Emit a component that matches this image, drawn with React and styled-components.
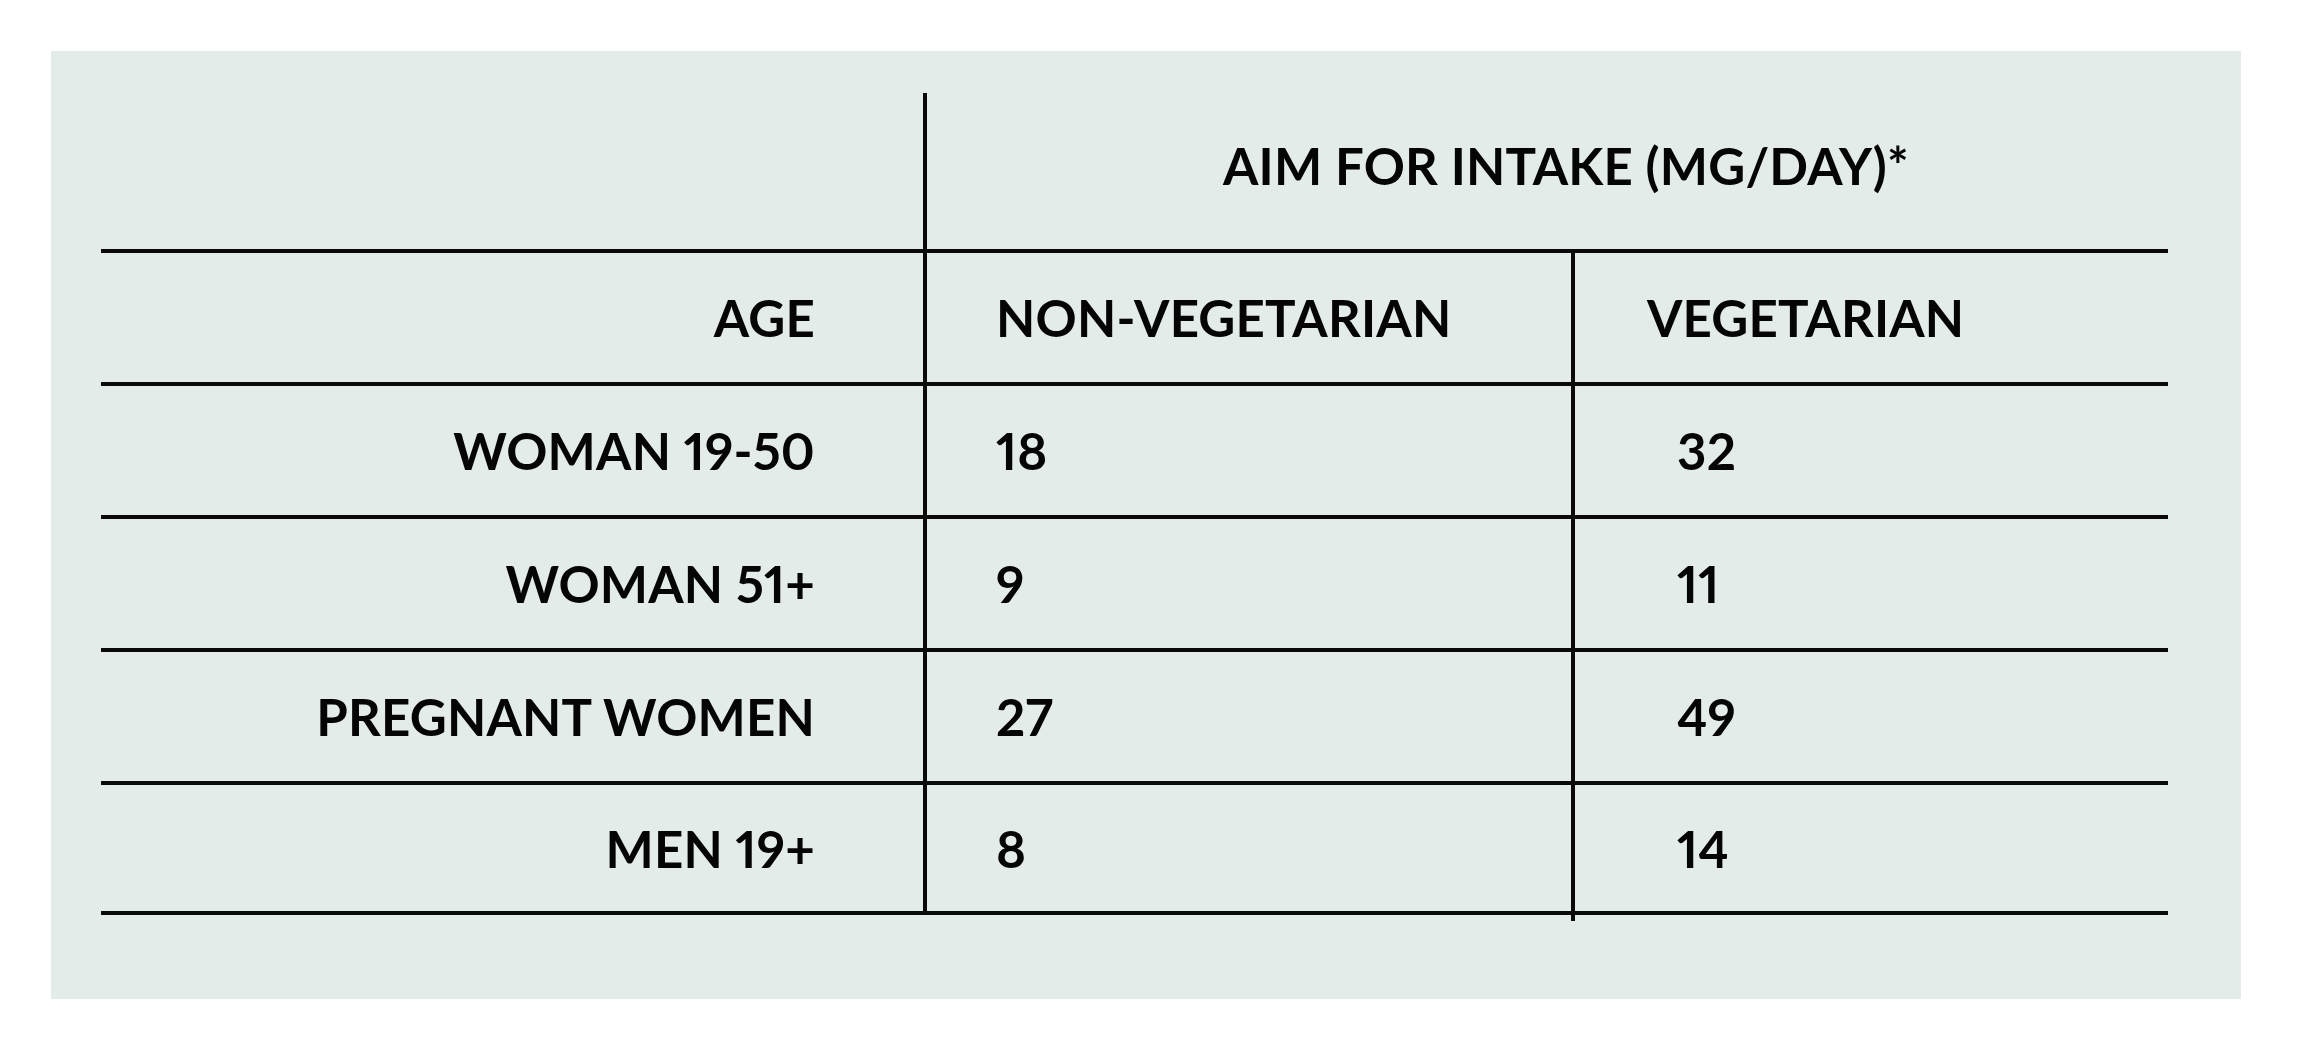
import React from 'react'
import styled, { createGlobalStyle } from 'styled-components'

const GlobalStyle = createGlobalStyle`
  html, body {
    margin: 0;
    padding: 0;
    background: #ffffff;
  }
  body {
    font-family: Lato, "Noto Sans", sans-serif;
    color: #050505;
  }
`

const Page = styled.div`
  padding: 51px 0 0 51px;
`

const Panel = styled.section`
  width: 2190px;
  height: 948px;
  box-sizing: border-box;
  background: #e3ece9;
  padding: 42px 73px 0 50px;
`

const Table = styled.div`
  display: flex;
  flex-direction: column;
`

const Row = styled.div`
  display: grid;
  grid-template-columns: 822px 648px 597px;
  height: ${(p) => p.$height}px;
  border-bottom: 4px solid #0a0a0a;
`

const Cell = styled.div`
  display: flex;
  align-items: center;
  justify-content: ${(p) => (p.$right ? 'flex-end' : 'flex-start')};
  padding: ${(p) => (p.$right ? '0 108px 0 0' : `0 0 0 ${p.$indent || 0}px`)};
  border-left: ${(p) => (p.$divider ? '4px solid #0a0a0a' : '0')};
  position: relative;
  font-size: 51px;
  font-weight: 700;
  letter-spacing: 0.2px;
  line-height: 1;
  white-space: nowrap;
  font-feature-settings: "pnum" 1, "lnum" 1;
  font-variant-numeric: proportional-nums lining-nums;
`

const WideCell = styled(Cell)`
  grid-column: 2 / span 2;
  padding-bottom: 12px;
`

/* the right rule runs a few px past the last line */
const Tail = styled.span`
  position: absolute;
  left: -4px;
  bottom: -10px;
  width: 4px;
  height: 10px;
  background: #0a0a0a;
`

const rows = [
  { age: 'WOMAN 19-50', non: '18', veg: '32' },
  { age: 'WOMAN 51+', non: '9', veg: '11' },
  { age: 'PREGNANT WOMEN', non: '27', veg: '49' },
  { age: 'MEN 19+', non: '8', veg: '14' },
]

const App = () => {
  return (
    <>
      <GlobalStyle />
      <Page>
        <Panel>
          <Table>
            <Row $height={156}>
              <Cell />
              <WideCell $divider $indent={296}>AIM FOR INTAKE (MG/DAY)*</WideCell>
            </Row>
            <Row $height={129}>
              <Cell $right>AGE</Cell>
              <Cell $divider $indent={69}>NON-VEGETARIAN</Cell>
              <Cell $divider $indent={72}>VEGETARIAN</Cell>
            </Row>
            {rows.map((r, i) => {
              const last = i === rows.length - 1
              return (
                <Row key={r.age} $height={last ? 126 : 129}>
                  <Cell $right>{r.age}</Cell>
                  <Cell $divider $indent={69}>{r.non}</Cell>
                  <Cell $divider $indent={102}>
                    {r.veg}
                    {last && <Tail />}
                  </Cell>
                </Row>
              )
            })}
          </Table>
        </Panel>
      </Page>
    </>
  )
}

export default App
